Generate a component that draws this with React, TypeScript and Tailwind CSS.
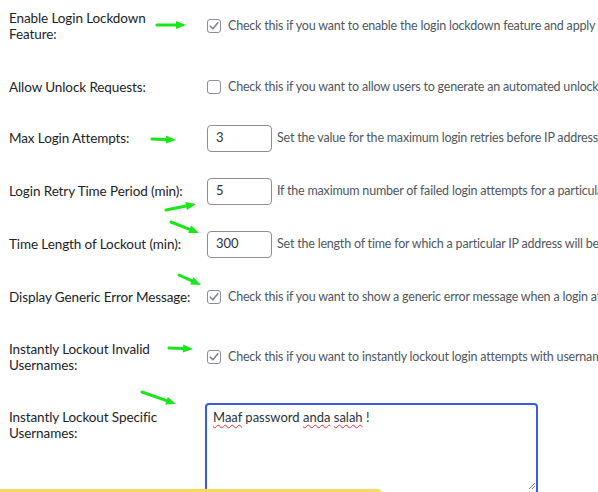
import React from "react";

type Arrow = { x1: number; y1: number; x2: number; y2: number };

const arrows: Arrow[] = [
  { x1: 157, y1: 25, x2: 186, y2: 25 },
  { x1: 152, y1: 139, x2: 176, y2: 140 },
  { x1: 166, y1: 210, x2: 196, y2: 204 },
  { x1: 171, y1: 222, x2: 199, y2: 233 },
  { x1: 179, y1: 275, x2: 201, y2: 285 },
  { x1: 169, y1: 348, x2: 193, y2: 349 },
  { x1: 142, y1: 392, x2: 176, y2: 404 },
];

const ArrowShape = ({ a }: { a: Arrow }) => {
  const ang = Math.atan2(a.y2 - a.y1, a.x2 - a.x1);
  const len = 10;
  const half = 4;
  const bx = a.x2 - Math.cos(ang) * len;
  const by = a.y2 - Math.sin(ang) * len;
  const px = -Math.sin(ang) * half;
  const py = Math.cos(ang) * half;
  const head = `${a.x2},${a.y2} ${bx + px},${by + py} ${bx - px},${by - py}`;
  return (
    <g>
      <line x1={a.x1} y1={a.y1} x2={bx} y2={by} stroke="#19e619" strokeWidth={3} strokeLinecap="round" />
      <polygon points={head} fill="#19e619" />
    </g>
  );
};

const Check = ({ on }: { on?: boolean }) => (
  <span className="w-[14px] h-[14px] shrink-0 rounded-[3px] border border-[#8c8f94] bg-white flex items-center justify-center">
    {on && (
      <svg width="12" height="12" viewBox="0 0 12 12">
        <path d="M2.3 6.2 L4.9 8.8 L9.8 2.8" fill="none" stroke="#7e8590" strokeWidth="1.6" strokeLinecap="round" strokeLinejoin="round" />
      </svg>
    )}
  </span>
);

const Label = ({ children }: { children: React.ReactNode }) => (
  <div className="w-[207px] shrink-0 pl-[9px] pr-[6px] text-[13.5px] tracking-[-0.1px] leading-[16px] text-[#1d2327]">{children}</div>
);

const CheckRow = ({ label, text, on, h }: { label: React.ReactNode; text: string; on?: boolean; h: string }) => (
  <div className={`flex items-center ${h}`}>
    <Label>{label}</Label>
    <div className="flex items-center gap-[7px] whitespace-nowrap text-[12.5px] tracking-[-0.2px] text-[#50575e]">
      <Check on={on} />
      <span>{text}</span>
    </div>
  </div>
);

const InputRow = ({ label, value, text, h }: { label: string; value: string; text: string; h: string }) => (
  <div className={`flex items-center ${h}`}>
    <Label>{label}</Label>
    <div className="flex items-center gap-[5px] whitespace-nowrap text-[12.5px] tracking-[-0.2px] text-[#50575e]">
      <div className="w-[65px] h-[27px] shrink-0 rounded-[4px] border border-[#8c8f94] bg-white pl-[8px] flex items-center text-[13px] tracking-normal text-[#2c3338]">
        {value}
      </div>
      <span>{text}</span>
    </div>
  </div>
);

const Squiggle = ({ children }: { children: React.ReactNode }) => (
  <span className="underline decoration-wavy decoration-[#e0303a] decoration-1 underline-offset-[2px]">{children}</span>
);

export default function App() {
  return (
    <div className="relative w-[598px] h-[492px] overflow-hidden bg-white font-['Segoe_UI','Lato',sans-serif]">
      <CheckRow
        h="h-[52px]"
        on
        label={<>Enable Login Lockdown<br />Feature:</>}
        text="Check this if you want to enable the login lockdown feature and apply the settings below"
      />
      <CheckRow
        h="h-[70px]"
        label="Allow Unlock Requests:"
        text="Check this if you want to allow users to generate an automated unlock request link"
      />
      <InputRow
        h="h-[32px]"
        label="Max Login Attempts:"
        value="3"
        text="Set the value for the maximum login retries before IP address is locked out"
      />
      <InputRow
        h="h-[74px]"
        label="Login Retry Time Period (min):"
        value="5"
        text="If the maximum number of failed login attempts for a particular IP address occur"
      />
      <InputRow
        h="h-[32px]"
        label="Time Length of Lockout (min):"
        value="300"
        text="Set the length of time for which a particular IP address will be prevented"
      />
      <CheckRow
        h="h-[74px]"
        on
        label="Display Generic Error Message:"
        text="Check this if you want to show a generic error message when a login attempt fails"
      />
      <CheckRow
        h="h-[46px]"
        on
        label={<>Instantly Lockout Invalid<br />Usernames:</>}
        text="Check this if you want to instantly lockout login attempts with usernames which do not exist"
      />
      <div className="flex items-start pt-[23px]">
        <div className="pt-[6px]">
          <Label>
            Instantly Lockout Specific
            <br />
            Usernames:
          </Label>
        </div>
        <div className="relative ml-[-2px] w-[333px] h-[110px] rounded-[4px] border-2 border-[#3b5be3] bg-white px-[6px] py-[3px] text-[13px] leading-[18px] text-[#2c3338]">
          <Squiggle>Maaf</Squiggle> password <Squiggle>anda</Squiggle> <Squiggle>salah</Squiggle> !
        </div>
      </div>
      <svg className="absolute left-[528px] top-[482px]" width="8" height="8" viewBox="0 0 8 8">
        <path d="M1 7 L7 1 M4 7 L7 4" stroke="#777" strokeWidth="1" />
      </svg>
      <div className="absolute left-0 bottom-0 w-[381px] h-[3px] rounded-tr-[3px] bg-[#fcd95c]" />
      <svg className="absolute inset-0 pointer-events-none" width="598" height="492">
        {arrows.map((a, i) => (
          <ArrowShape key={i} a={a} />
        ))}
      </svg>
    </div>
  );
}
